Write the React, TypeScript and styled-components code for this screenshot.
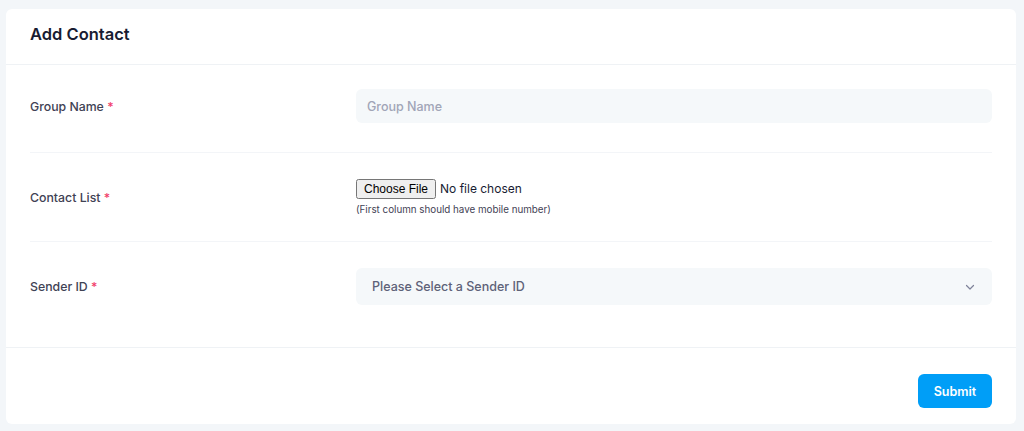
import styled, { createGlobalStyle } from "styled-components";

const GlobalStyle = createGlobalStyle`
  html, body {
    margin: 0;
    padding: 0;
    background: #f3f6f9;
    font-family: Inter, "Open Sans", sans-serif;
  }
  * {
    box-sizing: border-box;
  }
`;

const fields = [
  { id: "group", label: "Group Name" },
  { id: "contacts", label: "Contact List" },
  { id: "sender", label: "Sender ID" },
];

export default function App() {
  return (
    <>
      <GlobalStyle />
      <Page>
        <Card>
          <CardHeader>
            <CardTitle>Add Contact</CardTitle>
          </CardHeader>
          <CardBody>
            <FormRow>
              <Label htmlFor={fields[0].id}>
                {fields[0].label} <Required>*</Required>
              </Label>
              <TextInput id={fields[0].id} placeholder="Group Name" />
            </FormRow>
            <FormRow>
              <Label htmlFor={fields[1].id}>
                {fields[1].label} <Required>*</Required>
              </Label>
              <FileField>
                <FileInput id={fields[1].id} type="file" />
                <Hint>(First column should have mobile number)</Hint>
              </FileField>
            </FormRow>
            <FormRow $last>
              <Label htmlFor={fields[2].id}>
                {fields[2].label} <Required>*</Required>
              </Label>
              <SelectBox id={fields[2].id}>
                <span>Please Select a Sender ID</span>
                <svg width="12" height="12" viewBox="0 0 12 12" fill="none">
                  <path
                    d="M2.5 4.5L6 8L9.5 4.5"
                    stroke="#7e8299"
                    strokeWidth="1.2"
                    strokeLinecap="round"
                    strokeLinejoin="round"
                  />
                </svg>
              </SelectBox>
            </FormRow>
          </CardBody>
          <CardFooter>
            <SubmitButton type="button">Submit</SubmitButton>
          </CardFooter>
        </Card>
      </Page>
    </>
  );
}

const Page = styled.div`
  padding: 9px 8px 8px 6px;
`;

const Card = styled.div`
  background: #ffffff;
  border-radius: 6px;
  display: flex;
  flex-direction: column;
`;

const CardHeader = styled.div`
  height: 56px;
  padding: 0 24px 5px;
  display: flex;
  align-items: center;
  border-bottom: 1px solid #eff2f5;
`;

const CardTitle = styled.h3`
  margin: 0;
  font-size: 16.5px;
  font-weight: 600;
  color: #181c32;
`;

const CardBody = styled.div`
  padding: 24px 24px 16px;
`;

const FormRow = styled.div<{ $last?: boolean }>`
  display: grid;
  grid-template-columns: 326px 1fr;
  align-items: center;
  padding: 26px 0;
  border-bottom: ${({ $last }) => ($last ? "none" : "1px solid #f3f5f8")};

  &:first-child {
    padding-top: 0;
    padding-bottom: 29px;
  }
`;

const Label = styled.label`
  font-size: 12.3px;
  font-weight: 500;
  color: #3f4254;
`;

const Required = styled.span`
  color: #f1416c;
`;

const TextInput = styled.input`
  height: 34px;
  border: none;
  outline: none;
  border-radius: 6px;
  background: #f5f8fa;
  padding: 0 11px;
  font-family: inherit;
  font-size: 12.5px;
  font-weight: 500;
  color: #5e6278;

  &::placeholder {
    color: #a1a5b7;
  }
`;

const FileField = styled.div`
  display: flex;
  flex-direction: column;
  gap: 5px;
`;

const FileInput = styled.input`
  font-family: inherit;
  font-size: 12px;
  color: #181c32;
`;

const Hint = styled.span`
  font-size: 9.8px;
  color: #3f4254;
`;

const SelectBox = styled.div`
  height: 37px;
  border-radius: 6px;
  background: #f5f8fa;
  padding: 0 16px;
  display: flex;
  align-items: center;
  justify-content: space-between;
  font-size: 12.5px;
  font-weight: 500;
  color: #5e6278;
`;

const CardFooter = styled.div`
  border-top: 1px solid #eff2f5;
  padding: 26px 24px 16px;
  display: flex;
  justify-content: flex-end;
`;

const SubmitButton = styled.button`
  width: 74px;
  height: 34px;
  border: none;
  border-radius: 6px;
  background: #009ef7;
  color: #ffffff;
  font-family: inherit;
  font-size: 12.5px;
  font-weight: 600;
  cursor: pointer;
`;
